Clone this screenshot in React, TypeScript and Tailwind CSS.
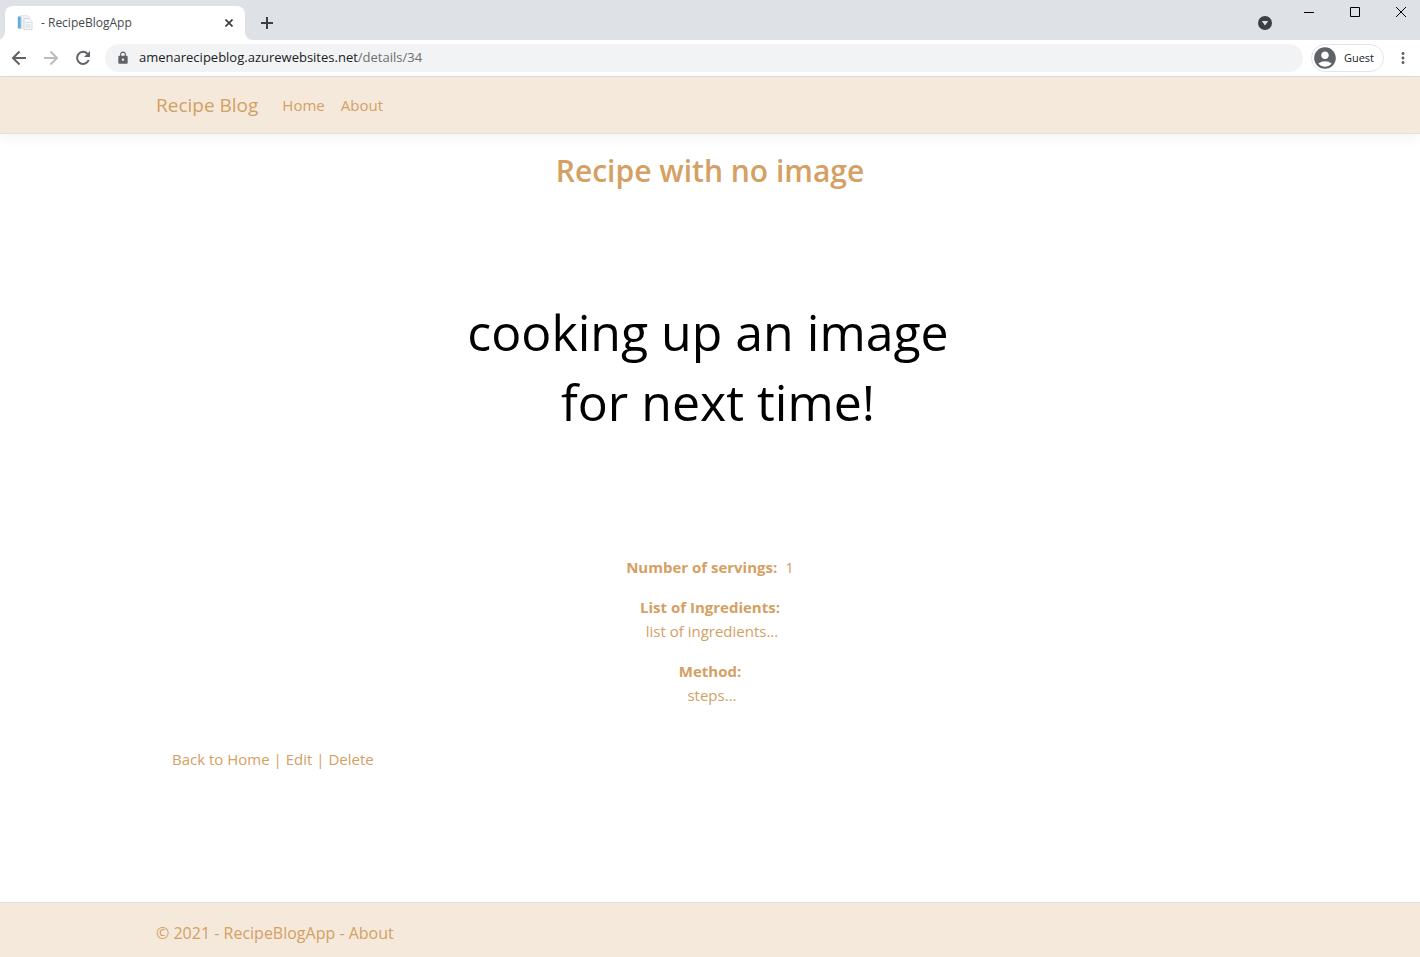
import { MdLock, MdAccountCircle, MdMoreVert } from "react-icons/md";

function Favicon() {
  return (
    <svg width="16" height="16" viewBox="0 0 16 16" aria-hidden="true">
      <path d="M3 0.5h8l2 2v11H3z" fill="#eff2f4" stroke="#dde1e4" strokeWidth="0.7" />
      <path d="M0.8 1.5h3v12h-3z" fill="#62aad8" />
      <path d="M3.8 1.5h1v12h-1z" fill="#c4ddec" />
      <path d="M7 3.5h5l3 3v8H7z" fill="#f6f8f9" stroke="#ccd1d6" strokeWidth="0.8" />
      <path d="M8.5 7.5h5M8.5 10h5M8.5 12h5" stroke="#ccd1d6" strokeWidth="0.8" />
    </svg>
  );
}

function TabStrip() {
  return (
    <div className="flex h-10 items-end justify-between bg-[#dee1e6] pl-[5px]">
      <div className="flex items-center">
        <div className="relative mt-1.5 flex h-[34px] w-60 items-center rounded-t-lg bg-white pr-2 pl-3">
          <svg className="absolute bottom-0 -left-[5px]" width="5" height="8" viewBox="3 0 5 8" aria-hidden="true">
            <path d="M8 0v8H0a8 8 0 0 0 8-8z" fill="#fff" />
          </svg>
          <svg className="absolute -right-2 bottom-0" width="8" height="8" viewBox="0 0 8 8" aria-hidden="true">
            <path d="M0 0v8h8a8 8 0 0 1-8-8z" fill="#fff" />
          </svg>
          <Favicon />
          <span className="ml-2 flex-1 text-xs text-[#45494d]">- RecipeBlogApp</span>
          <button type="button" aria-label="Close tab" className="flex size-4 items-center justify-center">
            <svg width="8" height="8" viewBox="0 0 8 8" aria-hidden="true">
              <path d="M0.5 0.5l7 7M7.5 0.5l-7 7" stroke="#3c4043" strokeWidth="1.7" />
            </svg>
          </button>
        </div>
        <button type="button" aria-label="New tab" className="mt-1.5 ml-2 flex size-7 items-center justify-center">
          <svg width="12" height="12" viewBox="0 0 12 12" aria-hidden="true">
            <path d="M6 0v12M0 6h12" stroke="#3c4043" strokeWidth="2" />
          </svg>
        </button>
      </div>
      <div className="flex h-full items-start">
        <button type="button" aria-label="Search tabs" className="mt-4 mr-3.5">
          <svg width="14" height="14" viewBox="0 0 14 14" aria-hidden="true">
            <circle cx="7" cy="7" r="7" fill="#3c4043" />
            <path d="M3.8 5h6.4L7 9.6z" fill="#dee1e6" />
          </svg>
        </button>
        <button type="button" aria-label="Minimize" className="flex h-6 w-[46px] items-center justify-center">
          <svg width="10" height="10" viewBox="0 0 10 10" aria-hidden="true">
            <path d="M0 5.5h10" stroke="#000" />
          </svg>
        </button>
        <button type="button" aria-label="Maximize" className="flex h-6 w-[46px] items-center justify-center">
          <svg width="10" height="10" viewBox="0 0 10 10" aria-hidden="true">
            <path d="M0.5 0.5h9v9h-9z" fill="none" stroke="#000" />
          </svg>
        </button>
        <button type="button" aria-label="Close window" className="-mr-1 flex h-6 w-[46px] items-center justify-center">
          <svg width="10" height="10" viewBox="0 0 10 10" aria-hidden="true">
            <path d="M0 0l10 10M10 0L0 10" stroke="#000" />
          </svg>
        </button>
      </div>
    </div>
  );
}

function Toolbar() {
  return (
    <div className="flex h-[37px] items-center border-b border-[#dadce0] bg-white pl-[9px]">
      <div className="flex items-center gap-3 text-[#5f6368]">
        <button type="button" aria-label="Back">
          <svg width="20" height="20" viewBox="0 0 20 20" fill="none" stroke="currentColor" strokeWidth="2" aria-hidden="true">
            <path d="M17 10H4.5M10.5 3.5L4 10l6.5 6.5" />
          </svg>
        </button>
        <button type="button" aria-label="Forward" className="text-[#babcbe]">
          <svg width="20" height="20" viewBox="0 0 20 20" fill="none" stroke="currentColor" strokeWidth="2" aria-hidden="true">
            <path d="M3 10h12.500M9.500 3.500L16 10l-6.500 6.500" />
          </svg>
        </button>
        <button type="button" aria-label="Reload">
          <svg width="20" height="20" viewBox="0 0 20 20" fill="none" aria-hidden="true">
            <path d="M14.600 5.900A6 6 0 1 0 15.700 12" stroke="currentColor" strokeWidth="2" />
            <path d="M17 3v6h-6z" fill="currentColor" />
          </svg>
        </button>
      </div>
      <div className="ml-3 flex h-7 flex-1 items-center rounded-full bg-[#f1f3f4] pl-[11px] text-[13px]">
        <MdLock className="size-3.5 text-[#5f6368]" />
        <input
          aria-label="Address"
          defaultValue="amenarecipeblog.azurewebsites.net"
          className="ml-[9px] field-sizing-content bg-transparent text-[#202124] outline-none"
        />
        <span className="text-[#6b6f73]">/details/34</span>
      </div>
      <button type="button" className="ml-2 flex h-7 items-center rounded-full border border-[#e3e5e8] pr-[9px] text-[11px] text-[#202124]">
        <MdAccountCircle className="size-[26px] text-[#5f6368]" />
        <span className="ml-1.5">Guest</span>
      </button>
      <button type="button" aria-label="Menu" className="mr-2 ml-2.5 text-lg text-[#5f6368]"><MdMoreVert /></button>
    </div>
  );
}

const container = "mx-auto w-full max-w-[1140px] px-4";

export default function App() {
  return (
    <div className="flex min-h-screen flex-col bg-white font-['Open_Sans','Noto_Sans',sans-serif]">
      <TabStrip />
      <Toolbar />
      <header className="border-b border-[#dee2e6] bg-[#f5e9db] text-[#d4a063] shadow-[0_4px_12px_rgba(0,0,0,0.05)]">
        <nav className={container + " flex h-14 items-center"}>
          <a href="#home" className="mr-6 text-[19px]">Recipe Blog</a>
          <div className="flex gap-4 text-[15px]">
            <a href="#home">Home</a>
            <a href="#about">About</a>
          </div>
        </nav>
      </header>
      <main className={container + " flex-1 pt-4 text-[15px] leading-6 text-[#d4a063]"}>
        <h1 className="text-center text-3xl leading-[42px] font-semibold">Recipe with no image</h1>
        <div className="flex h-[363px] flex-col items-center pt-[105px] pr-1 text-[50px] leading-[70px] text-black">
          <p>cooking up an image</p>
          <p className="pl-5">for next time!</p>
        </div>
        <dl className="text-center">
          <div className="flex justify-center gap-2">
            <dt className="font-bold">Number of servings:</dt>
            <dd>1</dd>
          </div>
          <div className="mt-4">
            <dt className="font-bold">List of Ingredients:</dt>
            <dd className="pl-1">list of ingredients...</dd>
          </div>
          <div className="mt-4">
            <dt className="font-bold">Method:</dt>
            <dd className="pl-1">steps...</dd>
          </div>
        </dl>
        <div className="mt-10 px-4">
          <a href="#home">Back to Home</a> | <a href="#edit">Edit</a> | <a href="#delete">Delete</a>
        </div>
      </main>
      <footer className="border-t border-[#dee2e6] bg-[#f5e9db] text-base text-[#d4a063]">
        <div className={container + " pt-[18px] pb-3 leading-6"}>
          © 2021 - RecipeBlogApp - <a href="#about">About</a>
        </div>
      </footer>
    </div>
  );
}
